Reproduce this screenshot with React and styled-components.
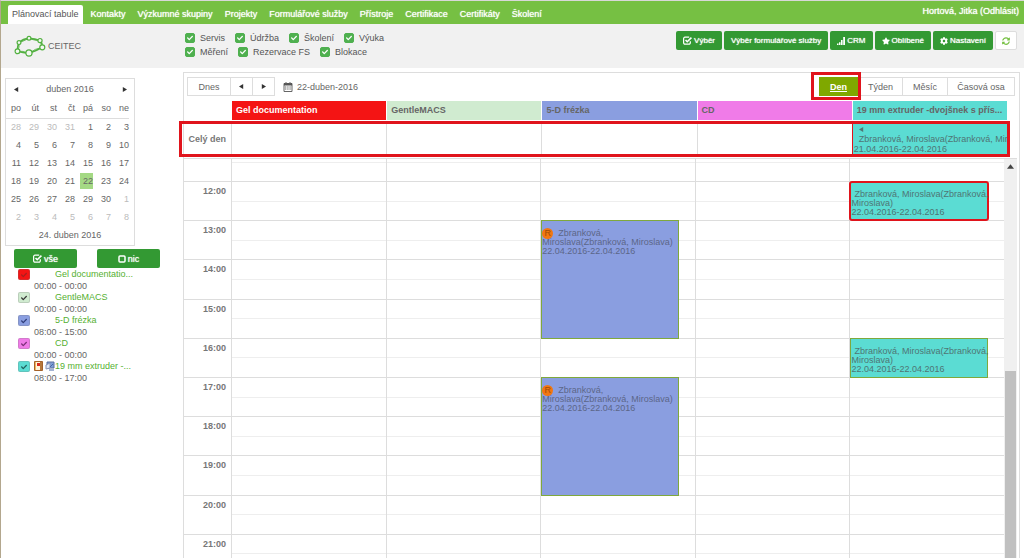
import React from "react";
import styled, { createGlobalStyle, css } from "styled-components";
import { FaStar, FaCog, FaSyncAlt, FaCheck } from "react-icons/fa";

const GlobalStyle = createGlobalStyle`
  * { box-sizing: border-box; }
  body {
    margin: 0;
    background: #fff;
    color: #666;
    font: 9px/12px "Liberation Sans", Arial, sans-serif;
  }
  button, input { font: inherit; color: inherit; margin: 0; }
`;

const RED = "#e0141c";

const Page = styled.div`
  display: flex;
  flex-direction: column;
  height: 100vh;
  overflow: hidden;
  border-left: 1px solid #b3a78e;
  border-top: 1px solid #d8d8d8;
`;

const TopBar = styled.header`
  display: flex;
  justify-content: space-between;
  flex: none;
  height: 23px;
  padding-left: 7px;
  padding-right: 5px;
  background: #76c043;
  color: #fff;
`;

const Tabs = styled.nav`
  display: flex;
  align-items: flex-end;
  gap: 4px;
`;

const Tab = styled.a`
  height: 19px;
  padding: 0 4px;
  line-height: 19px;
  text-decoration: none;
  white-space: nowrap;
  color: ${(p) => (p.$active ? "#555" : "#fff")};
  background: ${(p) => (p.$active ? "#fff" : "transparent")};
  text-shadow: ${(p) => (p.$active ? "none" : "0 0 1px #fff")};
  border-radius: 2px 2px 0 0;
`;

const User = styled.div`
  line-height: 20px;
  text-shadow: 0 0 1px #fff;
  a { color: inherit; text-decoration: none; }
`;

const SubBar = styled.div`
  display: flex;
  flex: none;
  align-items: flex-start;
  height: 44px;
  padding-right: 7px;
  background: #f1f1f1;
`;

const Brand = styled.div`
  display: flex;
  align-items: center;
  gap: 2px;
  flex: 0 0 184px;
  padding: 11px 0 0 13px;
`;

const Filters = styled.div`
  flex: 1;
  padding-top: 7px;
`;

const FilterRow = styled.div`
  display: flex;
  gap: 10px;
  height: 14px;
  align-items: center;
`;

const FilterLabel = styled.label`
  display: flex;
  align-items: center;
  gap: 5px;
  color: #555;
`;

const TickWrap = styled.span`
  display: grid;
  align-self: ${(p) => (p.$wide ? "end" : "center")};
  width: ${(p) => (p.$wide ? "12px" : "10px")};
  height: ${(p) => (p.$wide ? "11px" : "10px")};
  > * { grid-area: 1 / 1; place-self: center; }
  svg { pointer-events: none; }
`;

const TickInput = styled.input`
  appearance: none;
  width: 100%;
  height: 100%;
  border-radius: 2px;
  background: ${(p) => p.$color};
  border: 1px solid ${(p) => p.$edge || p.$color};
`;

function Tick({ color, edge, mark, wide, label }) {
  return (
    <TickWrap $wide={wide}>
      <TickInput type="checkbox" defaultChecked $color={color} $edge={edge} aria-label={label} />
      <FaCheck size={6} color={mark} />
    </TickWrap>
  );
}

const Actions = styled.div`
  display: flex;
  gap: 2px;
  padding-top: 7px;
`;

const Button = styled.button`
  display: flex;
  align-items: center;
  justify-content: center;
  gap: 2px;
  height: 19px;
  padding: 0 7px;
  border: 0;
  border-radius: 2px;
  background: #339933;
  color: #fff;
  font-size: 8px;
  white-space: nowrap;
  text-shadow: 0 0 1px #fff;
  ${(p) => p.$light && css`
    width: 22px;
    padding: 0;
    border: 1px solid #ddd;
    background: #fff;
    color: #76c043;
  `}
  ${(p) => p.$wide && css`width: 63px; font-size: 9px;`}
`;

const Content = styled.div`
  display: flex;
  flex: 1;
  min-height: 0;
  padding: 4px 4px 0 0;
`;

const Sidebar = styled.aside`
  flex: 0 0 182px;
  padding: 6px 0 0 4px;
`;

const Calendar = styled.div`
  width: 130px;
  border: 1px solid #ddd;
`;

const CalHead = styled.div`
  display: flex;
  align-items: center;
  justify-content: space-between;
  height: 20px;
  padding: 0 5px;
`;

const ArrowButton = styled.button`
  display: flex;
  align-items: center;
  justify-content: center;
  width: ${(p) => p.$width || 10}px;
  height: 100%;
  padding: 0;
  border: 0;
  background: none;
  color: #333;
`;

const CalTable = styled.table`
  border-collapse: collapse;
  table-layout: fixed;
  width: 123px;
  th, td {
    width: 18px;
    height: 18px;
    padding: 0;
    text-align: right;
    font-weight: normal;
  }
  th { height: 19px; }
  th:first-child { width: 15px; }
  thead { border-bottom: 1px solid #ddd; }
`;

const Day = styled.span`
  display: inline-block;
  min-width: 13px;
  line-height: 16px;
  color: ${(p) => (p.$muted ? "#bbb" : "#666")};
  background: ${(p) => (p.$selected ? "#a4d984" : "transparent")};
`;

const CalFoot = styled.div`
  height: 19px;
  line-height: 19px;
  text-align: center;
`;

const PickRow = styled.div`
  display: flex;
  gap: 20px;
  padding: 3px 0 0 9px;
`;

const DeviceList = styled.ul`
  list-style: none;
  margin: 0;
  padding: 0 0 0 13px;
`;

const Device = styled.li`
  display: grid;
  grid-template-columns: 16px 21px 1fr;
  grid-template-rows: 12px 11px;
  a {
    color: #55b031;
    text-decoration: none;
  }
`;

const DeviceIcons = styled.span`
  display: flex;
  gap: 2px;
  align-items: center;
`;

const DeviceTime = styled.span`
  grid-column: 2 / 4;
`;

const Panel = styled.main`
  display: flex;
  flex-direction: column;
  flex: 1;
  min-width: 0;
  border: 1px solid #ddd;
  border-bottom: 0;
`;

const Toolbar = styled.div`
  display: flex;
  justify-content: space-between;
  flex: none;
  height: 28px;
  padding: 4px 4px 5px 3px;
`;

const Group = styled.div`
  display: flex;
  position: relative;
`;

const Segment = styled.div`
  display: flex;
  border: 1px solid #ddd;
  && > * + * { border-left: 1px solid #ddd; }
`;

const SegButton = styled.button`
  min-width: ${(p) => p.$width}px;
  padding: 0;
  border: 0;
  background: ${(p) => (p.$active ? "#7fa800" : "#fff")};
  color: ${(p) => (p.$active ? "#fff" : "#666")};
  font-weight: ${(p) => (p.$active ? "bold" : "normal")};
  text-decoration: ${(p) => (p.$active ? "underline" : "none")};
`;

const Marked = styled.div`
  display: flex;
  position: relative;
  &::after {
    content: "";
    position: absolute;
    inset: -5px -3px -4px -8px;
    border: 3px solid ${RED};
    pointer-events: none;
  }
`;

const CurrentDate = styled.div`
  display: flex;
  align-items: center;
  gap: 4px;
  padding-left: 8px;
`;

const columns = "47px repeat(5, minmax(0, 1fr))";

const HeadRow = styled.div`
  display: grid;
  grid-template-columns: ${columns};
  flex: none;
  height: 19px;
  margin-right: 12px;
`;

const HeadCell = styled.div`
  margin-left: 1px;
  padding-left: 4px;
  line-height: 18px;
  font-weight: bold;
  color: ${(p) => p.$ink || "#666"};
  background: ${(p) => p.$color};
  overflow: hidden;
  white-space: nowrap;
  text-overflow: ellipsis;
`;

const AllDayRow = styled.div`
  display: grid;
  grid-template-columns: ${columns};
  flex: none;
  position: relative;
  height: 36px;
  margin: 1px 12px 1px 0;
  &::after {
    content: "";
    position: absolute;
    inset: 0 -3px 0 -5px;
    border: 3px solid ${RED};
    pointer-events: none;
  }
`;

const RowLabel = styled.div`
  padding-right: 5px;
  text-align: right;
  font-weight: bold;
  color: #777;
  line-height: ${(p) => p.$line || 18}px;
`;

const AllDayCell = styled.div`
  border-left: 1px solid ${(p) => (p.$marked ? RED : "#ddd")};
`;

const AllDayEvent = styled.div`
  height: 100%;
  padding: 3px 0 0 1px;
  overflow: hidden;
  background: #5bdcd3;
  color: #4f7573;
  line-height: 10px;
  white-space: nowrap;
`;

const Scroller = styled.div`
  display: flex;
  flex: 1;
  min-height: 0;
  margin-right: 2px;
  overflow: hidden;
  border-top: 1px solid #ddd;
`;

const Grid = styled.div`
  display: grid;
  flex: 1;
  grid-template-columns: ${columns};
  grid-template-rows: 22px repeat(10, 1fr);
  height: 414px;
`;

const HourLabel = styled(RowLabel)`
  grid-column: 1;
  grid-row: ${(p) => p.$row};
  border-top: ${(p) => (p.$row > 1 ? "1px solid #ddd" : "0")};
`;

const Slot = styled.div`
  display: flex;
  flex-direction: column;
  grid-column: ${(p) => p.$col};
  grid-row: ${(p) => p.$row};
  border-left: 1px solid #ddd;
  border-top: ${(p) => (p.$row > 1 ? "1px solid #ddd" : "0")};
  &::before {
    content: "";
    flex: ${(p) => (p.$row > 1 ? "1" : "0 0 3px")};
    border-bottom: 1px solid #eee;
  }
  &::after {
    content: "";
    flex: 1;
  }
`;

const Event = styled.article`
  z-index: 1;
  grid-column: ${(p) => p.$col};
  grid-row: ${(p) => p.$from} / ${(p) => p.$to};
  margin: 0 16px -1px 1px;
  padding-top: 8px;
  border: 1px solid #7fa83c;
  background: ${(p) => p.$color};
  color: ${(p) => p.$ink};
  line-height: 9px;
  white-space: nowrap;
  ${(p) => p.$marked && css`
    border: 2px solid ${RED};
    border-radius: 3px;
    padding-top: 7px;
    margin-left: 0;
    margin-right: 15px;
  `}
`;

const FirstLine = styled.div`
  display: flex;
  align-items: center;
  height: ${(p) => p.$height || 9}px;
  padding-left: ${(p) => p.$indent || 3}px;
`;

const Badge = styled.span`
  display: inline-flex;
  align-items: center;
  justify-content: center;
  width: 11px;
  height: 11px;
  margin: 0 5px 0 -3px;
  border-radius: 50%;
  background: #f27611;
  color: #9c4a08;
`;

const Scrollbar = styled.div`
  display: flex;
  flex-direction: column;
  flex: 0 0 13px;
  background: #f0f0f0;
`;

const ScrollUp = styled.div`
  display: flex;
  align-items: center;
  justify-content: center;
  height: 14px;
  color: #444;
`;

const ScrollThumb = styled.div`
  flex: 1;
  margin: 198px 1px 0;
  background: #c0c0c0;
`;

const Arrow = ({ dir, size = 5 }) => {
  const d = { left: "M5 0v6L0 3z", right: "M1 0v6l5-3z", up: "M0 5h6L3 1z" }[dir];
  return (
    <svg width={size} height={size} viewBox="0 0 6 6" aria-hidden="true">
      <path d={d} fill="currentColor" />
    </svg>
  );
};

const CheckSquare = () => (
  <svg width="9" height="9" viewBox="0 0 16 16" fill="none" stroke="currentColor" strokeWidth="2.2" aria-hidden="true">
    <path d="M13 9.5V12a2.4 2.4 0 0 1-2.4 2.4H3.5A2.4 2.4 0 0 1 1.1 12V4.5a2.4 2.4 0 0 1 2.4-2.4H11" />
    <path d="M4.5 7.2l3 3L15 3" strokeWidth="2.8" />
  </svg>
);

const EmptySquare = () => (
  <svg width="8" height="8" viewBox="0 0 16 16" fill="none" stroke="currentColor" strokeWidth="3" aria-hidden="true">
    <rect x="2" y="2" width="12" height="12" rx="2" />
  </svg>
);

const SignalBars = () => (
  <svg width="8" height="8" viewBox="0 0 8 8" fill="currentColor" aria-hidden="true">
    <path d="M0 6.5h1.500V8H0zM2 5.200h1.500V8H2zM4 3h1.600v5H4zM6.200 0H8v8H6.200z" />
  </svg>
);

const Logo = () => (
  <svg width="32" height="22" viewBox="0 0 32 22" fill="none" stroke="#52b040" aria-hidden="true">
    <path d="M5 7.600Q9 3.600 15 3.300 21 3.600 26 5.600 28.500 8 28.300 12.300 22 16 15 18.300 9 18 3.300 16.300 3.500 11 5 7.600z" strokeWidth="1.700" />
    <path d="M5 7.600Q10 6 15 3.300 20 5.600 26 5.600 27 9 28.300 12.300 21 13.500 15 18.300 9 15.500 3.300 16.300 6 12 5 7.600z" strokeWidth=".8" />
    <g fill="#f4f8f2" strokeWidth="1.200">
      <circle cx="5" cy="7.600" r="1.900" />
      <circle cx="15" cy="3.300" r="1.900" />
      <circle cx="26" cy="5.600" r="2.100" />
      <circle cx="28.300" cy="12.300" r="2.500" />
      <circle cx="15" cy="18" r="3.100" />
      <circle cx="3.500" cy="16.300" r="2.400" />
    </g>
  </svg>
);

const CalendarIcon = () => (
  <svg width="10" height="10" viewBox="0 0 10 10" aria-hidden="true">
    <path d="M1 1.500h8v8H1z" fill="#fff" stroke="#666" />
    <path d="M1 1h8v2.500H1z" fill="#555" />
    <path d="M2 5h6M2 7h6" stroke="#666" strokeDasharray="1.400 .8" />
    <path d="M3 0v2M7 0v2" stroke="#666" />
  </svg>
);

const DoorIcon = () => (
  <svg width="9" height="10" viewBox="0 0 9 10" aria-hidden="true">
    <path d="M.5.5h8v9h-8z" fill="#f1b45c" stroke="#a5622a" />
    <path d="M2 1h4v8H2z" fill="#fff3d8" />
    <path d="M3 2h3v3H3z" fill="#d8281c" />
    <path d="M7 1v8" stroke="#7a3c18" />
  </svg>
);

const ScreenIcon = () => (
  <svg width="10" height="10" viewBox="0 0 10 10" aria-hidden="true">
    <path d="M2 1h7v6H2z" fill="#7d9fd8" stroke="#5a6f9c" />
    <path d="M1 4l4-2v5l-4 1z" fill="#dfe8f8" stroke="#8593b5" />
    <path d="M4 9h5M5 6l3-3" stroke="#4868a8" />
  </svg>
);

const tabs = ["Plánovací tabule", "Kontakty", "Výzkumné skupiny", "Projekty", "Formulářové služby", "Přístroje", "Certifikace", "Certifikáty", "Školení"];
const filters = [["Servis", "Údržba", "Školení", "Výuka"], ["Měření", "Rezervace FS", "Blokace"]];
const weekdays = ["po", "út", "st", "čt", "pá", "so", "ne"];
const days = [28, 29, 30, 31, ...Array.from({ length: 30 }, (_, i) => i + 1), 1, 2, 3, 4, 5, 6, 7, 8];

const devices = [
  { name: "Gel documentatio...", title: "Gel documentation", time: "00:00 - 00:00", color: "#f41414", ink: "#fff", mark: "#a82020" },
  { name: "GentleMACS", title: "GentleMACS", time: "00:00 - 00:00", color: "#d0ebd0", mark: "#333" },
  { name: "5-D frézka", title: "5-D frézka", time: "08:00 - 15:00", color: "#8a9ee0", mark: "#2f3c78" },
  { name: "CD", title: "CD", time: "00:00 - 00:00", color: "#f07be8", mark: "#7a2f78" },
  { name: "19 mm extruder -...", title: "19 mm extruder -dvojšnek s přís...", time: "08:00 - 17:00", color: "#5bdcd3", mark: "#1f5f5c", icons: true },
];

const events = [
  { col: 6, from: 2, to: 3, marked: true },
  { col: 4, from: 3, to: 6, badge: true },
  { col: 6, from: 6, to: 7 },
  { col: 4, from: 7, to: 10, badge: true },
];

export default function App() {
  return (
    <Page>
      <GlobalStyle />
      <TopBar>
        <Tabs>
          {tabs.map((t, i) => (
            <Tab key={t} href="#" $active={i === 0}>{t}</Tab>
          ))}
        </Tabs>
        <User>Hortová, Jitka <a href="#">(Odhlásit)</a></User>
      </TopBar>

      <SubBar>
        <Brand><Logo />CEITEC</Brand>
        <Filters>
          {filters.map((row, i) => (
            <FilterRow key={i}>
              {row.map((f) => (
                <FilterLabel key={f}><Tick color="#4fb04f" mark="#fff" label={f} />{f}</FilterLabel>
              ))}
            </FilterRow>
          ))}
        </Filters>
        <Actions>
          <Button><CheckSquare />Výběr</Button>
          <Button>Výběr formulářové služby</Button>
          <Button><SignalBars />CRM</Button>
          <Button><FaStar size={8} />Oblíbené</Button>
          <Button><FaCog size={8} />Nastavení</Button>
          <Button $light aria-label="Obnovit"><FaSyncAlt size={8} /></Button>
        </Actions>
      </SubBar>

      <Content>
        <Sidebar>
          <Calendar>
            <CalHead>
              <ArrowButton aria-label="Předchozí měsíc"><Arrow dir="left" /></ArrowButton>
              <span>duben 2016</span>
              <ArrowButton aria-label="Další měsíc"><Arrow dir="right" /></ArrowButton>
            </CalHead>
            <CalTable>
              <thead>
                <tr>{weekdays.map((d) => <th key={d}>{d}</th>)}</tr>
              </thead>
              <tbody>
                {[0, 1, 2, 3, 4, 5].map((w) => (
                  <tr key={w}>
                    {days.slice(w * 7, w * 7 + 7).map((d, i) => {
                      const n = w * 7 + i;
                      return (
                        <td key={n}><Day $muted={n < 4 || n > 33} $selected={n === 25}>{d}</Day></td>
                      );
                    })}
                  </tr>
                ))}
              </tbody>
            </CalTable>
            <CalFoot>24. duben 2016</CalFoot>
          </Calendar>
          <PickRow>
            <Button $wide><CheckSquare />vše</Button>
            <Button $wide><EmptySquare />nic</Button>
          </PickRow>
          <DeviceList>
            {devices.map((d) => (
              <Device key={d.name}>
                <Tick wide color={d.color} edge="rgba(120,120,120,0.25)" mark={d.mark} label={d.title} />
                <DeviceIcons>{d.icons && <><DoorIcon /><ScreenIcon /></>}</DeviceIcons>
                <a href="#">{d.name}</a>
                <DeviceTime>{d.time}</DeviceTime>
              </Device>
            ))}
          </DeviceList>
        </Sidebar>

        <Panel>
          <Toolbar>
            <Group>
              <Segment>
                <SegButton $width={42}>Dnes</SegButton>
                <ArrowButton $width={22} aria-label="Předchozí den"><Arrow dir="left" /></ArrowButton>
                <ArrowButton $width={22} aria-label="Další den"><Arrow dir="right" /></ArrowButton>
              </Segment>
              <CurrentDate><CalendarIcon />22-duben-2016</CurrentDate>
            </Group>
            <Group>
              <Marked><SegButton $width={39} $active>Den</SegButton></Marked>
              <Segment>
                <SegButton $width={43}>Týden</SegButton>
                <SegButton $width={45}>Měsíc</SegButton>
                <SegButton $width={67}>Časová osa</SegButton>
              </Segment>
            </Group>
          </Toolbar>

          <HeadRow>
            <span />
            {devices.map((d) => (
              <HeadCell key={d.title} $color={d.color} $ink={d.ink}>{d.title}</HeadCell>
            ))}
          </HeadRow>

          <AllDayRow>
            <RowLabel $line={36}>Celý den</RowLabel>
            {devices.slice(0, 4).map((d) => <AllDayCell key={d.name} />)}
            <AllDayCell $marked>
              <AllDayEvent>
                <FirstLine $height={10} $indent={5}><Arrow dir="left" /></FirstLine>
                <FirstLine $height={10} $indent={5}>Zbranková, Miroslava(Zbranková, Miroslava)</FirstLine>
                <div>21.04.2016-22.04.2016</div>
              </AllDayEvent>
            </AllDayCell>
          </AllDayRow>

          <Scroller>
            <Grid>
              {Array.from({ length: 11 }, (_, r) => (
                <React.Fragment key={r}>
                  <HourLabel $row={r + 1}>{r > 0 && `${11 + r}:00`}</HourLabel>
                  {devices.map((d, c) => <Slot key={d.name} $row={r + 1} $col={c + 2} />)}
                </React.Fragment>
              ))}
              {events.map((e) => (
                <Event
                  key={`${e.col}-${e.from}`}
                  $col={e.col}
                  $from={e.from}
                  $to={e.to}
                  $marked={e.marked}
                  $color={devices[e.col - 2].color}
                  $ink={e.badge ? "#5c6688" : "#4f7573"}
                >
                  <FirstLine>
                    {e.badge && <Badge>R</Badge>}
                    {e.badge ? "Zbranková," : "Zbranková, Miroslava(Zbranková,"}
                  </FirstLine>
                  <div>{e.badge ? "Miroslava(Zbranková, Miroslava)" : "Miroslava)"}</div>
                  <div>22.04.2016-22.04.2016</div>
                </Event>
              ))}
            </Grid>
            <Scrollbar>
              <ScrollUp><Arrow dir="up" size={7} /></ScrollUp>
              <ScrollThumb />
            </Scrollbar>
          </Scroller>
        </Panel>
      </Content>
    </Page>
  );
}
